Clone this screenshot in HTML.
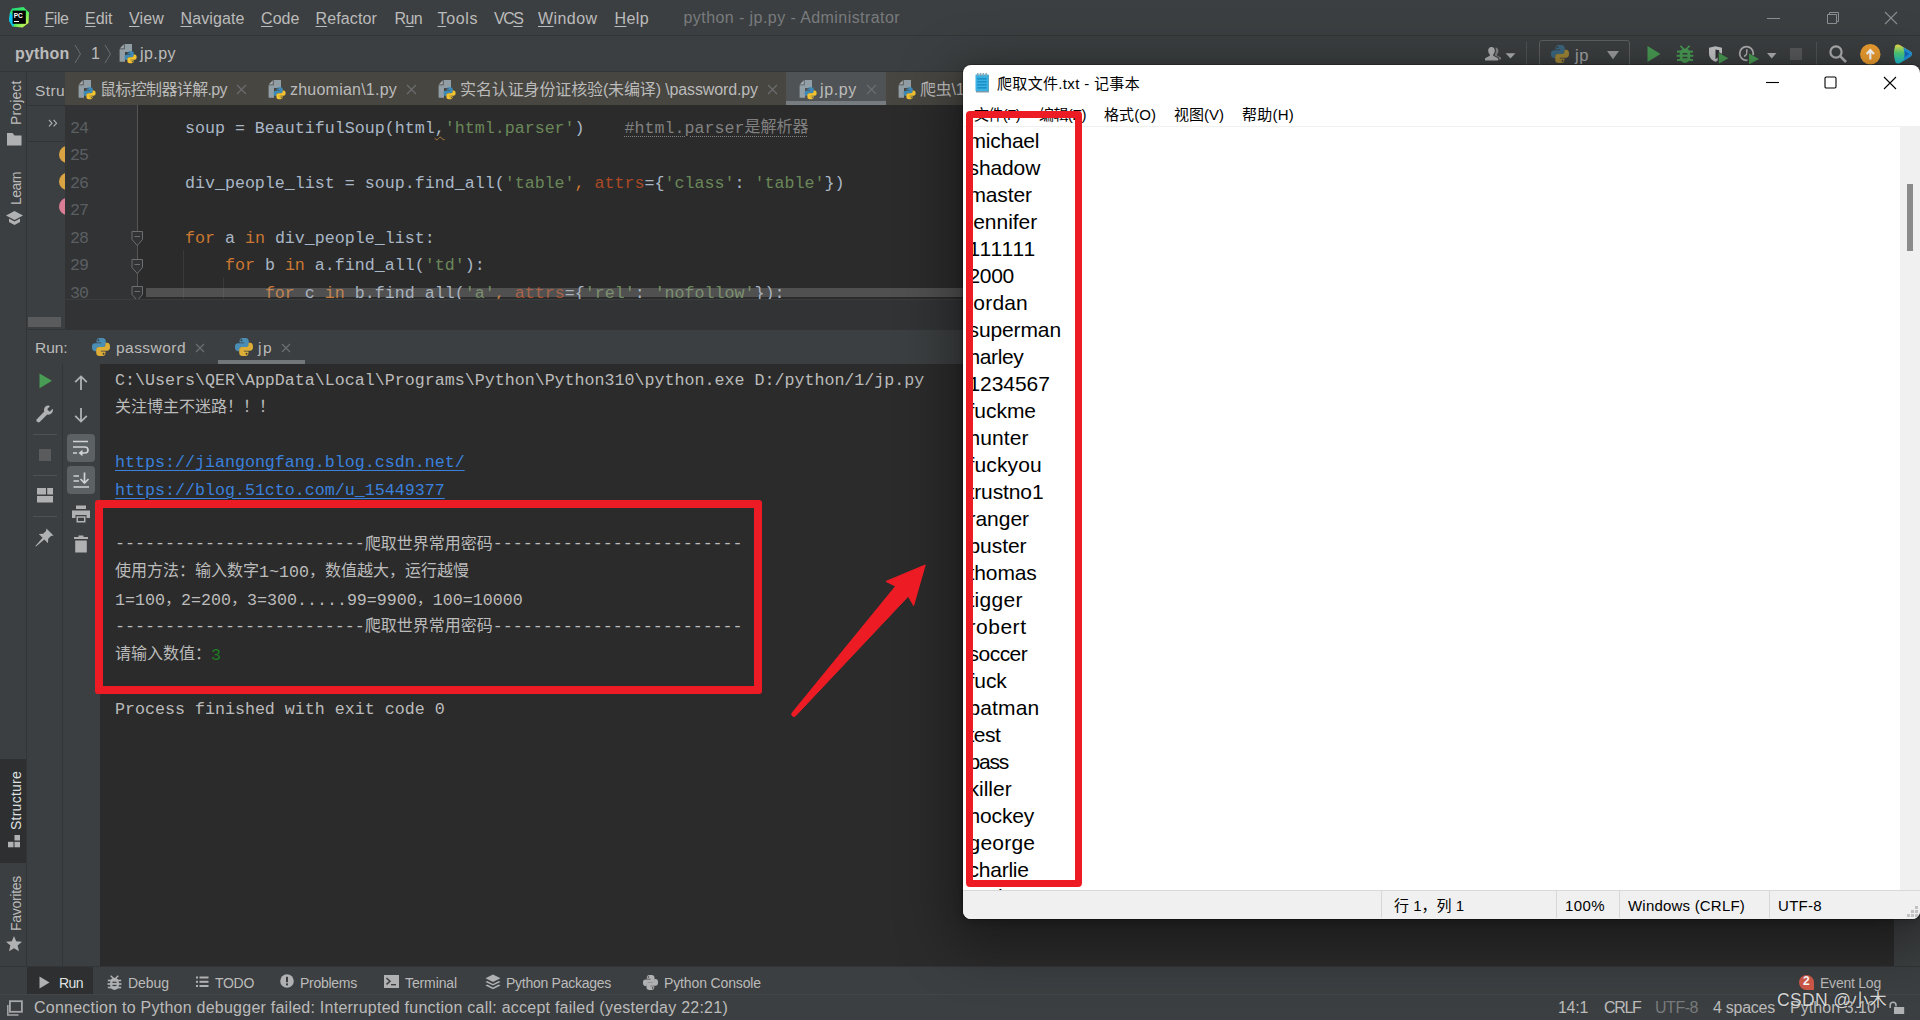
<!DOCTYPE html>
<html lang="zh"><head><meta charset="utf-8"><title>python - jp.py</title>
<style>
*{box-sizing:border-box;margin:0;padding:0}
html,body{width:1920px;height:1020px;overflow:hidden;background:#3c3f41}
body{position:relative;font-family:"Liberation Sans","Noto Sans CJK SC",sans-serif;color:#bbbbbb;font-size:16px}
.a{position:absolute}
.t{position:absolute;white-space:pre;display:block}
u{text-decoration:underline;text-underline-offset:2px;text-decoration-thickness:1px}
svg{position:absolute;overflow:visible}
.hl{position:absolute;height:1px;background:#323232}
.vl{position:absolute;width:1px;background:#323232}
.code{position:absolute;white-space:pre;font-family:"Liberation Mono","Noto Sans CJK SC",monospace;font-size:16.67px;line-height:27.5px;height:27.5px;color:#a9b7c6;letter-spacing:-0.004px}
.code .cj{font-size:16px;letter-spacing:0;position:relative;top:-1px}
.ds{position:relative;top:-1.5px}
.k{color:#cc7832}.s{color:#6a8759}.p{color:#aa4926}.c{color:#808080}
.con{color:#bbbbbb}
.lnk{color:#3a80dc;text-decoration:underline;text-underline-offset:3px;text-decoration-thickness:1px}
.ln{position:absolute;left:5px;width:20px;font-family:"Liberation Mono",monospace;font-size:16.67px;line-height:27.5px;color:#5c5f62;letter-spacing:-1px}
.np{position:absolute;left:969px;white-space:pre;font-family:"Liberation Sans","Noto Sans CJK SC",sans-serif;font-size:21px;letter-spacing:-0.3px;line-height:27px;height:27px;color:#000}

</style></head>
<body>
<div class="a" id="ide" style="left:0;top:0;width:1920px;height:1020px;background:#3c3f41">
<svg style="left:9px;top:7px" width="21" height="21" viewBox="0 0 21 21"><defs><linearGradient id="pcg" x1="0" y1="0" x2="1" y2="1"><stop offset="0" stop-color="#21d789"/><stop offset=".5" stop-color="#3bea62"/><stop offset="1" stop-color="#fcf84a"/></linearGradient></defs><path fill="url(#pcg)" d="M3 1.5L14.5 0L20 5.5L19.5 16L13.5 20.5L3.5 19.5L0 13.5L1 5.5Z"/><path fill="#07c3f2" d="M0 13.5L1 5.5L4 9L5 18.5L3.5 19.5Z"/><rect x="3.6" y="3.6" width="13.2" height="13.2" fill="#000"/><rect x="5" y="14" width="5" height="1" fill="#fff"/><text x="4.7" y="10.6" font-family="Liberation Sans,sans-serif" font-weight="bold" font-size="6.6" fill="#fff">PC</text></svg>
<span class="t" id="f0" style="left:44.5px;top:7.5px;font-size:16px;line-height:22px;color:#bbbbbb;letter-spacing:-0.449px;"><u>F</u>ile</span>
<span class="t" id="f1" style="left:85px;top:7.5px;font-size:16px;line-height:22px;color:#bbbbbb;letter-spacing:-0.020px;"><u>E</u>dit</span>
<span class="t" id="f2" style="left:129px;top:7.5px;font-size:16px;line-height:22px;color:#bbbbbb;letter-spacing:0.148px;"><u>V</u>iew</span>
<span class="t" id="f3" style="left:180.5px;top:7.5px;font-size:16px;line-height:22px;color:#bbbbbb;letter-spacing:0.105px;"><u>N</u>avigate</span>
<span class="t" id="f4" style="left:261px;top:7.5px;font-size:16px;line-height:22px;color:#bbbbbb;letter-spacing:0.059px;"><u>C</u>ode</span>
<span class="t" id="f5" style="left:315.5px;top:7.5px;font-size:16px;line-height:22px;color:#bbbbbb;letter-spacing:0.127px;"><u>R</u>efactor</span>
<span class="t" id="f6" style="left:394.5px;top:7.5px;font-size:16px;line-height:22px;color:#bbbbbb;letter-spacing:-0.625px;">R<u>u</u>n</span>
<span class="t" id="f7" style="left:437.5px;top:7.5px;font-size:16px;line-height:22px;color:#bbbbbb;letter-spacing:0.628px;"><u>T</u>ools</span>
<span class="t" id="f8" style="left:494px;top:7.5px;font-size:16px;line-height:22px;color:#bbbbbb;letter-spacing:-1.469px;">VC<u>S</u></span>
<span class="t" id="f9" style="left:538px;top:7.5px;font-size:16px;line-height:22px;color:#bbbbbb;letter-spacing:0.430px;"><u>W</u>indow</span>
<span class="t" id="f10" style="left:614.5px;top:7.5px;font-size:16px;line-height:22px;color:#bbbbbb;letter-spacing:0.395px;"><u>H</u>elp</span>
<span class="t" id="f11" style="left:683.5px;top:7.0px;font-size:16px;line-height:22px;color:#787b7d;letter-spacing:0.429px;">python - jp.py - Administrator</span>
<svg style="left:1767px;top:11px" width="14" height="14"><path d="M0 7.5H13" stroke="#8c8e90" stroke-width="1"/></svg>
<svg style="left:1826px;top:11px" width="14" height="14"><path d="M3.5 3.5V1.5H12.5V10.5H10.5M1.5 3.5H10.5V12.5H1.5Z" stroke="#8c8e90" stroke-width="1" fill="none"/></svg>
<svg style="left:1884px;top:11px" width="14" height="14"><path d="M1 1L13 13M13 1L1 13" stroke="#8c8e90" stroke-width="1.1" fill="none"/></svg>
<div class="a" style="left:0px;top:35px;width:1920px;height:1px;background:#323436;"></div>
<span class="t" id="f12" style="left:15px;top:42.5px;font-size:16px;line-height:22px;color:#bbbbbb;font-weight:bold;letter-spacing:0.195px;">python</span>
<svg style="left:74px;top:44px" width="8" height="20"><path d="M1 1L6.5 10L1 19" stroke="#6b6e70" stroke-width="1" fill="none"/></svg>
<span class="t" id="f13" style="left:91px;top:42.5px;font-size:16px;line-height:22px;color:#bbbbbb;">1</span>
<svg style="left:104px;top:44px" width="8" height="20"><path d="M1 1L6.5 10L1 19" stroke="#6b6e70" stroke-width="1" fill="none"/></svg>
<svg style="left:119px;top:44px" width="18" height="19" viewBox="0 0 18 19"><path fill="#9aa7b0" fill-opacity=".9" d="M5.6 0H13V8H6V17.8H0.6V5.2H5.6Z"/><path fill="#c5cdd3" fill-opacity=".75" d="M0.8 4.4L4.8 0.3V4.4Z"/><g transform="translate(5.6 7.2) scale(1)"><path fill="#3d8ab8" d="M5 0H7C8.4 0 9.2 .9 9.2 2.2V4.2C9.2 5.3 8.4 6 7.4 6H4.6C3.6 6 3 6.7 3 7.6V8.8H1.9C.7 8.8 0 7.8 0 6.4V5.6C0 4.3 .8 3.5 2 3.5H6.1V3H3V2.2C3 .9 3.7 0 5 0ZM4.3 .9A.65.65 0 1 0 4.3 2.2A.65.65 0 1 0 4.3 .9Z"/><path fill="#f2c230" transform="rotate(180 6 6)" d="M5 0H7C8.4 0 9.2 .9 9.2 2.2V4.2C9.2 5.3 8.4 6 7.4 6H4.6C3.6 6 3 6.7 3 7.6V8.8H1.9C.7 8.8 0 7.8 0 6.4V5.6C0 4.3 .8 3.5 2 3.5H6.1V3H3V2.2C3 .9 3.7 0 5 0ZM4.3 .9A.65.65 0 1 0 4.3 2.2A.65.65 0 1 0 4.3 .9Z"/></g></svg>
<span class="t" id="f14" style="left:140px;top:42.5px;font-size:16px;line-height:22px;color:#bbbbbb;letter-spacing:0.441px;">jp.py</span>
<svg style="left:1484px;top:45px" width="32" height="20" viewBox="0 0 32 20"><path fill="#afb1b3" d="M7.5 2C9.6 2 10.8 3.6 10.8 5.6C10.8 7.4 10 8.8 9.2 9.6V10.8L14.2 13.2V15.5H1V13.2L5.8 10.8V9.6C5 8.8 4.2 7.4 4.2 5.6C4.2 3.6 5.4 2 7.5 2Z"/><path fill="#afb1b3" fill-opacity=".6" d="M11.5 2.6C13.4 2.6 14.4 4 14.4 5.8C14.4 7.4 13.8 8.6 13 9.4V10.4L17 12.4V14.5H15V12.6L10.4 10.3C11.2 9.3 11.9 7.6 11.9 5.6C11.9 4.4 11.8 3.4 11.5 2.6Z"/><path fill="#afb1b3" d="M21.6 8.2H31.4L26.5 13.4Z"/></svg>
<div class="a" style="left:1526px;top:42px;width:1px;height:24px;background:#515456;"></div>
<div class="a" style="left:1539px;top:40px;width:91px;height:34px;border:1px solid #5e6062;border-radius:3px"></div>
<svg style="left:1551px;top:45px;opacity:0.55" width="18" height="18" viewBox="0 0 12 12"><path fill="#3d8ab8" d="M5 0H7C8.4 0 9.2 .9 9.2 2.2V4.2C9.2 5.3 8.4 6 7.4 6H4.6C3.6 6 3 6.7 3 7.6V8.8H1.9C.7 8.8 0 7.8 0 6.4V5.6C0 4.3 .8 3.5 2 3.5H6.1V3H3V2.2C3 .9 3.7 0 5 0ZM4.3 .9A.65.65 0 1 0 4.3 2.2A.65.65 0 1 0 4.3 .9Z"/><path fill="#f2c230" transform="rotate(180 6 6)" d="M5 0H7C8.4 0 9.2 .9 9.2 2.2V4.2C9.2 5.3 8.4 6 7.4 6H4.6C3.6 6 3 6.7 3 7.6V8.8H1.9C.7 8.8 0 7.8 0 6.4V5.6C0 4.3 .8 3.5 2 3.5H6.1V3H3V2.2C3 .9 3.7 0 5 0ZM4.3 .9A.65.65 0 1 0 4.3 2.2A.65.65 0 1 0 4.3 .9Z"/></svg>
<span class="t" id="f15" style="left:1575px;top:43.5px;font-size:16.5px;line-height:23px;color:#a4a6a8;letter-spacing:0.578px;">jp</span>
<svg style="left:1606.5px;top:51px" width="12" height="9"><path fill="#9a9c9e" d="M0 0H12L6 8.2Z"/></svg>
<svg style="left:1647px;top:46px" width="14" height="16"><path fill="#499c54" d="M0.5 0L13.5 8L0.5 16Z"/></svg>
<svg style="left:1676px;top:45.3px" width="18" height="18" viewBox="0 0 18 18"><g fill="#499c54"><path d="M3.8 8.4C3.8 5.4 6 3.4 9 3.4S14.2 5.4 14.2 8.4V12.6C14.2 15.8 11.8 17.9 9 17.9S3.8 15.8 3.8 12.6Z"/><path d="M5 0.2L8.2 3.4L7 4.6L3.8 1.4ZM13 0.2L9.8 3.4L11 4.6L14.2 1.4Z"/><rect x="1" y="5.6" width="16" height="2"/><rect x="0.6" y="9.8" width="16.8" height="2"/><rect x="1" y="14" width="16" height="2"/></g><rect x="6.6" y="8" width="4.8" height="1.5" fill="#3c3f41"/><rect x="6.6" y="11.8" width="4.8" height="1.5" fill="#3c3f41"/></svg>
<svg style="left:1708px;top:46px" width="22" height="20" viewBox="0 0 22 20"><path fill="#c3c5c7" d="M1 1.8L7.5 0.3L14 1.8V7.6C14 11.6 11 14.6 7.5 15.8C4 14.6 1 11.6 1 7.6Z"/><path fill="#2f3234" d="M7.5 3.4L11.2 4.2V8.4C11.2 10.4 9.6 12 7.5 13Z"/><path fill="#3c3f41" d="M9.6 5.4L22 12.2L9.6 19.4Z"/><path fill="#499c54" d="M10.8 7L20.3 12.3L10.8 17.7Z"/></svg>
<svg style="left:1738px;top:45px" width="24" height="20" viewBox="0 0 24 20"><circle cx="8.5" cy="8.5" r="6.8" fill="none" stroke="#afb1b3" stroke-width="1.8"/><path d="M8.8 4.2V9L6.2 11.6" stroke="#afb1b3" stroke-width="1.5" fill="none"/><path fill="#3c3f41" d="M9.5 7L22 14L9.5 21Z"/><path fill="#499c54" d="M11 8.5L21 14L11 19.5Z"/></svg>
<svg style="left:1766.5px;top:53px" width="10" height="6"><path fill="#afb1b3" d="M0 0H9.5L4.75 5.5Z"/></svg>
<div class="a" style="left:1790px;top:48px;width:12px;height:12px;background:#57595b;"></div>
<div class="a" style="left:1816px;top:42px;width:1px;height:24px;background:#515456;"></div>
<svg style="left:1828px;top:44px" width="20" height="20" viewBox="0 0 20 20"><circle cx="8" cy="8" r="5.6" fill="none" stroke="#afb1b3" stroke-width="2.2"/><path d="M12.2 12.2L18 18" stroke="#afb1b3" stroke-width="2.6"/></svg>
<svg style="left:1860px;top:44px" width="21" height="21" viewBox="0 0 21 21"><circle cx="10.3" cy="10.3" r="10.2" fill="#f0a030"/><path d="M10.3 15.5V6.8M6.6 10L10.3 6.2L14 10" stroke="#fff" stroke-width="2.2" fill="none"/></svg>
<svg style="left:1893px;top:44px" width="20" height="20" viewBox="0 0 20 20"><defs><linearGradient id="cwg" x1="0" y1="0" x2="0" y2="1"><stop offset="0" stop-color="#f3e04a"/><stop offset=".45" stop-color="#4fd07a"/><stop offset="1" stop-color="#19b8d8"/></linearGradient></defs><path fill="url(#cwg)" d="M2.2 1.6C3.6 0.2 5.6 0.2 7.2 1.2L17.6 7.6C19.4 8.8 19.4 11.2 17.6 12.4L7.2 18.9C5.6 19.9 3.6 19.6 2.4 18.2C0.6 13 0.4 7 2.2 1.6Z"/><path fill="#1e8fe0" d="M10.2 3.2L17.6 7.6C19.4 8.8 19.4 11.2 17.6 12.4L10.4 16.9C12 12.5 12 7.5 10.2 3.2Z"/><path fill="#1565b8" d="M11.4 6.8L16 10L11.4 13.2C11.9 11.2 11.9 8.8 11.4 6.8Z"/></svg>
<div class="a" style="left:0px;top:71px;width:1920px;height:1px;background:#323436;"></div>
<div class="a" style="left:0px;top:72px;width:27px;height:894px;background:#3c3f41;"></div>
<div class="a" style="left:26px;top:72px;width:1px;height:894px;background:#323436;"></div>
<div class="a" style="left:0px;top:759px;width:26px;height:104px;background:#2d2f30;"></div>
<span class="t" id="f16" style="left:5.5px;top:125px;height:20px;line-height:20px;font-size:14px;color:#bbbbbb;transform-origin:0 0;transform:rotate(-90deg);letter-spacing:0.132px;">Project</span>
<span class="t" id="f17" style="left:5.5px;top:205px;height:20px;line-height:20px;font-size:14px;color:#bbbbbb;transform-origin:0 0;transform:rotate(-90deg);letter-spacing:-0.562px;">Learn</span>
<span class="t" id="f18" style="left:5.5px;top:830px;height:20px;line-height:20px;font-size:14px;color:#dfe1e2;transform-origin:0 0;transform:rotate(-90deg);letter-spacing:0.243px;">Structure</span>
<span class="t" id="f19" style="left:5.5px;top:931px;height:20px;line-height:20px;font-size:14px;color:#bbbbbb;transform-origin:0 0;transform:rotate(-90deg);letter-spacing:-0.286px;">Favorites</span>
<svg style="left:7px;top:133px" width="15" height="13"><path fill="#afb1b3" d="M0 0H5.5L7.5 2.5H14.5V12.5H0Z"/></svg>
<svg style="left:6px;top:211px" width="17" height="15" viewBox="0 0 17 15"><path fill="#afb1b3" d="M8.5 0L17 4.5L8.5 9L0 4.5Z"/><path fill="#afb1b3" d="M3 7.6L8.5 10.5L14 7.6V11L8.5 14L3 11Z"/></svg>
<svg style="left:8px;top:835px" width="13" height="13"><g fill="#afb1b3"><rect x="6.5" y="0" width="5.5" height="5.5"/><rect x="0" y="6.8" width="5.5" height="5.5"/><rect x="6.5" y="6.8" width="5.5" height="5.5"/></g></svg>
<svg style="left:6px;top:936px" width="16" height="16" viewBox="0 0 16 16"><path fill="#afb1b3" d="M8 0L10.2 5.3L16 5.8L11.6 9.6L13 15.2L8 12.2L3 15.2L4.4 9.6L0 5.8L5.8 5.3Z"/></svg>
<div class="a" style="left:27px;top:72px;width:38px;height:258px;background:#3c3f41;"></div>
<span class="t" id="f20" style="left:35px;top:79.7px;font-size:15.5px;line-height:22px;color:#bbbbbb;letter-spacing:0.391px;">Stru</span>
<div class="a" style="left:27px;top:105px;width:38px;height:1px;background:#323436;"></div>
<div class="a" style="left:27px;top:141px;width:38px;height:1px;background:#323436;"></div>
<svg style="left:48px;top:118.5px" width="10" height="9"><path d="M1 1L4 4.2L1 7.4M5.6 1L8.6 4.2L5.6 7.4" stroke="#afb1b3" stroke-width="1.1" fill="none"/></svg>
<div class="a" style="left:28px;top:317px;width:33px;height:10px;background:#595b5d;"></div>
<div class="a" style="left:65px;top:72px;width:1855px;height:33px;background:#474641;"></div>
<div class="a" style="left:786px;top:72px;width:100px;height:33px;background:#4f5355;"></div>
<div class="a" style="left:786px;top:101px;width:100px;height:4px;background:#777c80;"></div>
<svg style="left:78px;top:80px" width="18" height="19" viewBox="0 0 18 19"><path fill="#9aa7b0" fill-opacity=".9" d="M5.6 0H13V8H6V17.8H0.6V5.2H5.6Z"/><path fill="#c5cdd3" fill-opacity=".75" d="M0.8 4.4L4.8 0.3V4.4Z"/><g transform="translate(5.6 7.2) scale(1)"><path fill="#3d8ab8" d="M5 0H7C8.4 0 9.2 .9 9.2 2.2V4.2C9.2 5.3 8.4 6 7.4 6H4.6C3.6 6 3 6.7 3 7.6V8.8H1.9C.7 8.8 0 7.8 0 6.4V5.6C0 4.3 .8 3.5 2 3.5H6.1V3H3V2.2C3 .9 3.7 0 5 0ZM4.3 .9A.65.65 0 1 0 4.3 2.2A.65.65 0 1 0 4.3 .9Z"/><path fill="#f2c230" transform="rotate(180 6 6)" d="M5 0H7C8.4 0 9.2 .9 9.2 2.2V4.2C9.2 5.3 8.4 6 7.4 6H4.6C3.6 6 3 6.7 3 7.6V8.8H1.9C.7 8.8 0 7.8 0 6.4V5.6C0 4.3 .8 3.5 2 3.5H6.1V3H3V2.2C3 .9 3.7 0 5 0ZM4.3 .9A.65.65 0 1 0 4.3 2.2A.65.65 0 1 0 4.3 .9Z"/></g></svg>
<span class="t" id="f21" style="left:100px;top:78.7px;font-size:16px;line-height:22px;color:#bbbbbb;letter-spacing:-0.636px;">鼠标控制器详解.py</span>
<svg style="left:236.5px;top:84.5px" width="9.0" height="9.0" viewBox="0 0 9.0 9.0"><path d="M0 0L9.0 9.0M9.0 0L0 9.0" stroke="#6c6e6f" stroke-width="1.1" fill="none"/></svg>
<svg style="left:268px;top:80px" width="18" height="19" viewBox="0 0 18 19"><path fill="#9aa7b0" fill-opacity=".9" d="M5.6 0H13V8H6V17.8H0.6V5.2H5.6Z"/><path fill="#c5cdd3" fill-opacity=".75" d="M0.8 4.4L4.8 0.3V4.4Z"/><g transform="translate(5.6 7.2) scale(1)"><path fill="#3d8ab8" d="M5 0H7C8.4 0 9.2 .9 9.2 2.2V4.2C9.2 5.3 8.4 6 7.4 6H4.6C3.6 6 3 6.7 3 7.6V8.8H1.9C.7 8.8 0 7.8 0 6.4V5.6C0 4.3 .8 3.5 2 3.5H6.1V3H3V2.2C3 .9 3.7 0 5 0ZM4.3 .9A.65.65 0 1 0 4.3 2.2A.65.65 0 1 0 4.3 .9Z"/><path fill="#f2c230" transform="rotate(180 6 6)" d="M5 0H7C8.4 0 9.2 .9 9.2 2.2V4.2C9.2 5.3 8.4 6 7.4 6H4.6C3.6 6 3 6.7 3 7.6V8.8H1.9C.7 8.8 0 7.8 0 6.4V5.6C0 4.3 .8 3.5 2 3.5H6.1V3H3V2.2C3 .9 3.7 0 5 0ZM4.3 .9A.65.65 0 1 0 4.3 2.2A.65.65 0 1 0 4.3 .9Z"/></g></svg>
<span class="t" id="f22" style="left:290px;top:78.7px;font-size:16px;line-height:22px;color:#bbbbbb;letter-spacing:0.226px;">zhuomian\1.py</span>
<svg style="left:406.5px;top:84.5px" width="9.0" height="9.0" viewBox="0 0 9.0 9.0"><path d="M0 0L9.0 9.0M9.0 0L0 9.0" stroke="#6c6e6f" stroke-width="1.1" fill="none"/></svg>
<svg style="left:438px;top:80px" width="18" height="19" viewBox="0 0 18 19"><path fill="#9aa7b0" fill-opacity=".9" d="M5.6 0H13V8H6V17.8H0.6V5.2H5.6Z"/><path fill="#c5cdd3" fill-opacity=".75" d="M0.8 4.4L4.8 0.3V4.4Z"/><g transform="translate(5.6 7.2) scale(1)"><path fill="#3d8ab8" d="M5 0H7C8.4 0 9.2 .9 9.2 2.2V4.2C9.2 5.3 8.4 6 7.4 6H4.6C3.6 6 3 6.7 3 7.6V8.8H1.9C.7 8.8 0 7.8 0 6.4V5.6C0 4.3 .8 3.5 2 3.5H6.1V3H3V2.2C3 .9 3.7 0 5 0ZM4.3 .9A.65.65 0 1 0 4.3 2.2A.65.65 0 1 0 4.3 .9Z"/><path fill="#f2c230" transform="rotate(180 6 6)" d="M5 0H7C8.4 0 9.2 .9 9.2 2.2V4.2C9.2 5.3 8.4 6 7.4 6H4.6C3.6 6 3 6.7 3 7.6V8.8H1.9C.7 8.8 0 7.8 0 6.4V5.6C0 4.3 .8 3.5 2 3.5H6.1V3H3V2.2C3 .9 3.7 0 5 0ZM4.3 .9A.65.65 0 1 0 4.3 2.2A.65.65 0 1 0 4.3 .9Z"/></g></svg>
<span class="t" id="f23" style="left:460px;top:78.7px;font-size:16px;line-height:22px;color:#bbbbbb;letter-spacing:-0.125px;">实名认证身份证核验(未编译) \password.py</span>
<svg style="left:767.5px;top:84.5px" width="9.0" height="9.0" viewBox="0 0 9.0 9.0"><path d="M0 0L9.0 9.0M9.0 0L0 9.0" stroke="#6c6e6f" stroke-width="1.1" fill="none"/></svg>
<svg style="left:799px;top:80px" width="18" height="19" viewBox="0 0 18 19"><path fill="#9aa7b0" fill-opacity=".9" d="M5.6 0H13V8H6V17.8H0.6V5.2H5.6Z"/><path fill="#c5cdd3" fill-opacity=".75" d="M0.8 4.4L4.8 0.3V4.4Z"/><g transform="translate(5.6 7.2) scale(1)"><path fill="#3d8ab8" d="M5 0H7C8.4 0 9.2 .9 9.2 2.2V4.2C9.2 5.3 8.4 6 7.4 6H4.6C3.6 6 3 6.7 3 7.6V8.8H1.9C.7 8.8 0 7.8 0 6.4V5.6C0 4.3 .8 3.5 2 3.5H6.1V3H3V2.2C3 .9 3.7 0 5 0ZM4.3 .9A.65.65 0 1 0 4.3 2.2A.65.65 0 1 0 4.3 .9Z"/><path fill="#f2c230" transform="rotate(180 6 6)" d="M5 0H7C8.4 0 9.2 .9 9.2 2.2V4.2C9.2 5.3 8.4 6 7.4 6H4.6C3.6 6 3 6.7 3 7.6V8.8H1.9C.7 8.8 0 7.8 0 6.4V5.6C0 4.3 .8 3.5 2 3.5H6.1V3H3V2.2C3 .9 3.7 0 5 0ZM4.3 .9A.65.65 0 1 0 4.3 2.2A.65.65 0 1 0 4.3 .9Z"/></g></svg>
<span class="t" id="f24" style="left:820px;top:78.7px;font-size:16px;line-height:22px;color:#bbbbbb;letter-spacing:0.641px;">jp.py</span>
<svg style="left:866.5px;top:84.5px" width="9.0" height="9.0" viewBox="0 0 9.0 9.0"><path d="M0 0L9.0 9.0M9.0 0L0 9.0" stroke="#6c6e6f" stroke-width="1.1" fill="none"/></svg>
<svg style="left:898px;top:80px" width="18" height="19" viewBox="0 0 18 19"><path fill="#9aa7b0" fill-opacity=".9" d="M5.6 0H13V8H6V17.8H0.6V5.2H5.6Z"/><path fill="#c5cdd3" fill-opacity=".75" d="M0.8 4.4L4.8 0.3V4.4Z"/><g transform="translate(5.6 7.2) scale(1)"><path fill="#3d8ab8" d="M5 0H7C8.4 0 9.2 .9 9.2 2.2V4.2C9.2 5.3 8.4 6 7.4 6H4.6C3.6 6 3 6.7 3 7.6V8.8H1.9C.7 8.8 0 7.8 0 6.4V5.6C0 4.3 .8 3.5 2 3.5H6.1V3H3V2.2C3 .9 3.7 0 5 0ZM4.3 .9A.65.65 0 1 0 4.3 2.2A.65.65 0 1 0 4.3 .9Z"/><path fill="#f2c230" transform="rotate(180 6 6)" d="M5 0H7C8.4 0 9.2 .9 9.2 2.2V4.2C9.2 5.3 8.4 6 7.4 6H4.6C3.6 6 3 6.7 3 7.6V8.8H1.9C.7 8.8 0 7.8 0 6.4V5.6C0 4.3 .8 3.5 2 3.5H6.1V3H3V2.2C3 .9 3.7 0 5 0ZM4.3 .9A.65.65 0 1 0 4.3 2.2A.65.65 0 1 0 4.3 .9Z"/></g></svg>
<span class="t" id="f25" style="left:920px;top:78.7px;font-size:16px;line-height:22px;color:#bbbbbb;letter-spacing:-0.243px;">爬虫\1.py</span>
<svg style="left:994.5px;top:84.5px" width="9.0" height="9.0" viewBox="0 0 9.0 9.0"><path d="M0 0L9.0 9.0M9.0 0L0 9.0" stroke="#6c6e6f" stroke-width="1.1" fill="none"/></svg>
<div class="a" style="left:65px;top:105px;width:1855px;height:195px;background:#2b2b2b;"></div>
<div class="a" style="left:65px;top:105px;width:73px;height:195px;background:#313335;"></div>
<div class="a" style="left:137px;top:105px;width:1px;height:195px;background:#555555;"></div>
<div class="a" style="left:183px;top:250px;width:1px;height:50px;background:#393939;"></div>
<div class="a" style="left:223px;top:278px;width:1px;height:22px;background:#393939;"></div>
<div class="a" style="left:58px;top:105px;width:7px;height:195px;overflow:hidden"><div class="a" style="left:1px;top:41px;width:17px;height:17px;border-radius:50%;background:#d9a343"></div><div class="a" style="left:1px;top:68px;width:17px;height:17px;border-radius:50%;background:#d9a343"></div><div class="a" style="left:1px;top:93px;width:17px;height:17px;border-radius:50%;background:#db7e95"></div></div>
<div class="a" style="left:65px;top:105px;width:1855px;height:195px;overflow:hidden">
<div class="ln" style="top:9.85px">24</div>
<div class="code" style="left:40px;top:9.85px">        soup = BeautifulSoup(html<span style="text-decoration:underline wavy #b07a36 1px;text-underline-offset:3px">,</span><span class="s">'html.parser'</span>)    <span class="c" style="text-decoration:underline dotted #808080 1px;text-underline-offset:3px">#html.parser<span class="cj">是解析器</span></span></div>
<div class="ln" style="top:37.35px">25</div>
<div class="code" style="left:40px;top:37.35px"></div>
<div class="ln" style="top:64.85px">26</div>
<div class="code" style="left:40px;top:64.85px">        div_people_list = soup.find_all(<span class="s">'table'</span><span class="k">,</span> <span class="p">attrs</span>={<span class="s">'class'</span>: <span class="s">'table'</span>})</div>
<div class="ln" style="top:92.35px">27</div>
<div class="code" style="left:40px;top:92.35px"></div>
<div class="ln" style="top:119.85px">28</div>
<div class="code" style="left:40px;top:119.85px">        <span class="k">for</span> a <span class="k">in</span> div_people_list:</div>
<div class="ln" style="top:147.35px">29</div>
<div class="code" style="left:40px;top:147.35px">            <span class="k">for</span> b <span class="k">in</span> a.find_all(<span class="s">'td'</span>):</div>
<div class="ln" style="top:174.85px">30</div>
<div class="code" style="left:40px;top:174.85px">                <span class="k">for</span> c <span class="k">in</span> b.find_all(<span class="s">'a'</span><span class="k">,</span> <span class="p">attrs</span>={<span class="s">'rel'</span>: <span class="s">'nofollow'</span>}):</div>
<svg style="left:66px;top:126.0px" width="13" height="16"><path d="M1 0.5H11.5V8.5L6.25 14.5L1 8.5Z" fill="#313335" stroke="#6c6e70" stroke-width="1"/><path d="M3.5 5.5H9" stroke="#6c6e70" stroke-width="1"/></svg>
<svg style="left:66px;top:153.5px" width="13" height="16"><path d="M1 0.5H11.5V8.5L6.25 14.5L1 8.5Z" fill="#313335" stroke="#6c6e70" stroke-width="1"/><path d="M3.5 5.5H9" stroke="#6c6e70" stroke-width="1"/></svg>
<svg style="left:66px;top:181.0px" width="13" height="16"><path d="M1 0.5H11.5V8.5L6.25 14.5L1 8.5Z" fill="#313335" stroke="#6c6e70" stroke-width="1"/><path d="M3.5 5.5H9" stroke="#6c6e70" stroke-width="1"/></svg>
</div>
<div class="a" style="left:146px;top:287.5px;width:1774px;height:9.5px;background:rgba(166,166,166,.30);"></div>
<div class="a" style="left:27px;top:299px;width:38px;height:31px;background:#3c3f41;"></div>
<div class="a" style="left:65px;top:299px;width:1855px;height:30px;background:#313335;"></div>
<div class="a" style="left:65px;top:299px;width:1855px;height:1px;background:#3a3d3f;"></div>
<div class="a" style="left:28px;top:317px;width:33px;height:10px;background:#595b5d;"></div>
<div class="a" style="left:27px;top:329px;width:1893px;height:1px;background:#323436;"></div>
<div class="a" style="left:27px;top:330px;width:1893px;height:34px;background:#3c3f41;"></div>
<span class="t" id="f26" style="left:35px;top:336.5px;font-size:15.5px;line-height:22px;color:#bbbbbb;letter-spacing:-0.062px;">Run:</span>
<svg style="left:92px;top:338px;opacity:1" width="18" height="18" viewBox="0 0 12 12"><path fill="#4a8db5" d="M5 0H7C8.4 0 9.2 .9 9.2 2.2V4.2C9.2 5.3 8.4 6 7.4 6H4.6C3.6 6 3 6.7 3 7.6V8.8H1.9C.7 8.8 0 7.8 0 6.4V5.6C0 4.3 .8 3.5 2 3.5H6.1V3H3V2.2C3 .9 3.7 0 5 0ZM4.3 .9A.65.65 0 1 0 4.3 2.2A.65.65 0 1 0 4.3 .9Z"/><path fill="#dcae38" transform="rotate(180 6 6)" d="M5 0H7C8.4 0 9.2 .9 9.2 2.2V4.2C9.2 5.3 8.4 6 7.4 6H4.6C3.6 6 3 6.7 3 7.6V8.8H1.9C.7 8.8 0 7.8 0 6.4V5.6C0 4.3 .8 3.5 2 3.5H6.1V3H3V2.2C3 .9 3.7 0 5 0ZM4.3 .9A.65.65 0 1 0 4.3 2.2A.65.65 0 1 0 4.3 .9Z"/></svg>
<span class="t" id="f27" style="left:116px;top:336.5px;font-size:15.5px;line-height:22px;color:#bbbbbb;letter-spacing:0.457px;">password</span>
<svg style="left:196px;top:343.5px" width="8" height="8" viewBox="0 0 8 8"><path d="M0 0L8 8M8 0L0 8" stroke="#6c6e6f" stroke-width="1.2" fill="none"/></svg>
<svg style="left:235px;top:338px;opacity:1" width="18" height="18" viewBox="0 0 12 12"><path fill="#4a8db5" d="M5 0H7C8.4 0 9.2 .9 9.2 2.2V4.2C9.2 5.3 8.4 6 7.4 6H4.6C3.6 6 3 6.7 3 7.6V8.8H1.9C.7 8.8 0 7.8 0 6.4V5.6C0 4.3 .8 3.5 2 3.5H6.1V3H3V2.2C3 .9 3.7 0 5 0ZM4.3 .9A.65.65 0 1 0 4.3 2.2A.65.65 0 1 0 4.3 .9Z"/><path fill="#dcae38" transform="rotate(180 6 6)" d="M5 0H7C8.4 0 9.2 .9 9.2 2.2V4.2C9.2 5.3 8.4 6 7.4 6H4.6C3.6 6 3 6.7 3 7.6V8.8H1.9C.7 8.8 0 7.8 0 6.4V5.6C0 4.3 .8 3.5 2 3.5H6.1V3H3V2.2C3 .9 3.7 0 5 0ZM4.3 .9A.65.65 0 1 0 4.3 2.2A.65.65 0 1 0 4.3 .9Z"/></svg>
<span class="t" id="f28" style="left:258px;top:336.5px;font-size:15.5px;line-height:22px;color:#bbbbbb;letter-spacing:1.461px;">jp</span>
<svg style="left:282px;top:343.5px" width="8" height="8" viewBox="0 0 8 8"><path d="M0 0L8 8M8 0L0 8" stroke="#6c6e6f" stroke-width="1.2" fill="none"/></svg>
<div class="a" style="left:218px;top:360px;width:87px;height:4px;background:#72777a;"></div>
<div class="a" style="left:27px;top:364px;width:1893px;height:602px;background:#3c3f41;"></div>
<div class="a" style="left:62px;top:364px;width:1px;height:602px;background:#323436;"></div>
<div class="a" style="left:100px;top:364px;width:1794px;height:602px;background:#2b2b2b;"></div>
<div class="a" style="left:1894px;top:364px;width:26px;height:602px;background:#3c3f41;"></div>
<svg style="left:39px;top:373px" width="14" height="16"><path fill="#499c54" d="M0.5 0.5L13 7.8L0.5 15.2Z"/></svg>
<svg style="left:36px;top:405px" width="18" height="18" viewBox="0 0 18 18"><path fill="#afb1b3" d="M12.2 0.6C10 0.6 8 2.5 8 4.9C8 5.5 8.1 6 8.3 6.5L0.8 14.2C0.2 14.8 0.2 15.8 0.8 16.4L1.5 17.1C2.1 17.7 3.1 17.7 3.7 17.1L11.2 9.5C11.6 9.6 12 9.7 12.5 9.7C15 9.7 16.9 7.7 16.9 5.3C16.9 4.7 16.8 4.2 16.6 3.7L13.6 6.7L11.2 4.3L14.1 1.1C13.5 0.8 12.9 0.6 12.2 0.6Z"/></svg>
<div class="a" style="left:33px;top:434px;width:24px;height:1px;background:#4f5254;"></div>
<div class="a" style="left:39px;top:449px;width:12px;height:12px;background:#595b5d;"></div>
<div class="a" style="left:33px;top:475px;width:24px;height:1px;background:#4f5254;"></div>
<svg style="left:37px;top:488px" width="16" height="15"><g fill="#afb1b3"><rect x="0" y="0" width="9" height="6.5"/><rect x="10.2" y="0" width="5.8" height="6.5"/><rect x="0" y="8" width="16" height="6.5"/></g></svg>
<div class="a" style="left:33px;top:516px;width:24px;height:1px;background:#4f5254;"></div>
<svg style="left:35px;top:528px" width="19" height="19" viewBox="0 0 19 19"><path fill="#afb1b3" d="M11.5 0.5L18.5 7.5L16 8L13.2 10.8L13 15.2L9.3 11.4L1 18.6L0.4 18L7.6 9.7L3.8 6L8.2 5.8L11 3Z"/></svg>
<svg style="left:74px;top:375px" width="14" height="16"><path d="M7 15V1.5M1.2 7.2L7 1.4L12.8 7.2" stroke="#afb1b3" stroke-width="1.8" fill="none"/></svg>
<svg style="left:74px;top:407px" width="14" height="16"><path d="M7 1V14.5M1.2 8.8L7 14.6L12.8 8.8" stroke="#afb1b3" stroke-width="1.8" fill="none"/></svg>
<div class="a" style="left:67px;top:433.5px;width:28px;height:28px;border-radius:4px;background:#5c6164"></div>
<svg style="left:72px;top:440px" width="18" height="16" viewBox="0 0 18 16"><path d="M1 1.5H16M1 7H13A3 3 0 0 1 13 13H8.5M1 13H5" stroke="#d0d2d3" stroke-width="1.6" fill="none"/><path fill="#d0d2d3" d="M10.5 9.8V16.2L6.5 13Z"/></svg>
<div class="a" style="left:67px;top:466px;width:28px;height:28px;border-radius:4px;background:#5c6164"></div>
<svg style="left:73px;top:472px" width="17" height="17" viewBox="0 0 17 17"><path d="M0.5 4H6M0.5 9H6M0.5 15H16" stroke="#d0d2d3" stroke-width="1.7" fill="none"/><path d="M11.5 0.5V10.5M7.5 7L11.5 11L15.5 7" stroke="#d0d2d3" stroke-width="1.7" fill="none"/></svg>
<svg style="left:72px;top:505px" width="18" height="18" viewBox="0 0 18 18"><g fill="#afb1b3"><rect x="4" y="0.5" width="10" height="3.5"/><path d="M0 5.5H18V13H14.5V10H3.5V13H0Z"/><path d="M4.5 11.2H13.5V17.5H4.5ZM6 12.7V16H12V12.7Z"/></g></svg>
<svg style="left:74px;top:535px" width="14" height="18" viewBox="0 0 14 18"><g fill="#afb1b3"><path d="M4.5 0.5H9.5V2H14V4H0V2H4.5Z"/><path d="M1.2 5.5H12.8V17.5H1.2Z"/></g></svg>
<div class="code con" style="left:115px;top:367.05px">C:\Users\QER\AppData\Local\Programs\Python\Python310\python.exe D:/python/1/jp.py</div>
<div class="code con" style="left:115px;top:394.50px"><span class="cj">关注博主不迷路！！！</span></div>
<div class="code con" style="left:115px;top:421.95px"></div>
<div class="code con" style="left:115px;top:449.40px"><span class="lnk">https://jiangongfang.blog.csdn.net/</span></div>
<div class="code con" style="left:115px;top:476.85px"><span class="lnk">https://blog.51cto.com/u_15449377</span></div>
<div class="code con" style="left:115px;top:504.30px"></div>
<div class="code con" style="left:115px;top:531.75px"><span class="ds">-------------------------</span><span class="cj">爬取世界常用密码</span><span class="ds">-------------------------</span></div>
<div class="code con" style="left:115px;top:559.20px"><span class="cj">使用方法：输入数字</span>1~100<span class="cj">，数值越大，运行越慢</span></div>
<div class="code con" style="left:115px;top:586.65px">1=100<span class="cj">，</span>2=200<span class="cj">，</span>3=300.....99=9900<span class="cj">，</span>100=10000</div>
<div class="code con" style="left:115px;top:614.10px"><span class="ds">-------------------------</span><span class="cj">爬取世界常用密码</span><span class="ds">-------------------------</span></div>
<div class="code con" style="left:115px;top:641.55px"><span class="cj">请输入数值：</span><span style="color:#1e7d22">3</span></div>
<div class="code con" style="left:115px;top:669.00px"></div>
<div class="code con" style="left:115px;top:696.45px">Process finished with exit code 0</div>
<div class="a" style="left:0px;top:966px;width:1920px;height:1px;background:#323436;"></div>
<div class="a" style="left:0px;top:967px;width:1920px;height:28px;background:#3c3f41;"></div>
<div class="a" style="left:27px;top:967px;width:66px;height:27px;background:#2d2f30;"></div>
<div class="a" style="left:0px;top:994px;width:1920px;height:1px;background:#434648;"></div>
<svg style="left:39px;top:976px" width="11" height="13"><path fill="#afb1b3" d="M0.5 0.5L10.5 6.5L0.5 12.5Z"/></svg>
<span class="t" id="f29" style="left:59px;top:972.5px;font-size:14px;line-height:20px;color:#dfe1e2;letter-spacing:-0.562px;">Run</span>
<svg style="left:107px;top:974.5px" width="15" height="15" viewBox="0 0 18 18"><g fill="#afb1b3"><path d="M3.8 8.4C3.8 5.4 6 3.4 9 3.4S14.2 5.4 14.2 8.4V12.6C14.2 15.8 11.8 17.9 9 17.9S3.8 15.8 3.8 12.6Z"/><path d="M5 0.2L8.2 3.4L7 4.6L3.8 1.4ZM13 0.2L9.8 3.4L11 4.6L14.2 1.4Z"/><rect x="1" y="5.6" width="16" height="2"/><rect x="0.6" y="9.8" width="16.8" height="2"/><rect x="1" y="14" width="16" height="2"/></g><rect x="6.6" y="8" width="4.8" height="1.5" fill="#3c3f41"/><rect x="6.6" y="11.8" width="4.8" height="1.5" fill="#3c3f41"/></svg>
<span class="t" id="f30" style="left:128px;top:972.5px;font-size:14px;line-height:20px;color:#bbbbbb;letter-spacing:-0.053px;">Debug</span>
<svg style="left:196px;top:976px" width="13" height="12"><g fill="#afb1b3"><rect x="0" y="0.5" width="2" height="2"/><rect x="3.5" y="0.5" width="9" height="2"/><rect x="0" y="4.8" width="2" height="2"/><rect x="3.5" y="4.8" width="9" height="2"/><rect x="0" y="9" width="2" height="2"/><rect x="3.5" y="9" width="9" height="2"/></g></svg>
<span class="t" id="f31" style="left:215px;top:972.5px;font-size:14px;line-height:20px;color:#bbbbbb;letter-spacing:-0.301px;">TODO</span>
<svg style="left:280px;top:974px" width="14" height="14" viewBox="0 0 14 14"><circle cx="7" cy="7" r="6.8" fill="#afb1b3"/><rect x="6" y="2.8" width="2" height="5.4" fill="#3c3f41"/><rect x="6" y="9.4" width="2" height="2" fill="#3c3f41"/></svg>
<span class="t" id="f32" style="left:300px;top:972.5px;font-size:14px;line-height:20px;color:#bbbbbb;letter-spacing:-0.268px;">Problems</span>
<svg style="left:384px;top:975px" width="15" height="13" viewBox="0 0 15 13"><rect x="0" y="0" width="15" height="13" fill="#afb1b3"/><path d="M2.5 3L6 6.2L2.5 9.4" stroke="#3c3f41" stroke-width="1.5" fill="none"/><rect x="7" y="9" width="5" height="1.4" fill="#3c3f41"/></svg>
<span class="t" id="f33" style="left:405px;top:972.5px;font-size:14px;line-height:20px;color:#bbbbbb;letter-spacing:-0.113px;">Terminal</span>
<svg style="left:485px;top:974px" width="16" height="16" viewBox="0 0 16 16"><g fill="#afb1b3"><path d="M8 0.5L15.5 4.2L8 8L0.5 4.2Z"/><path d="M2.2 7L8 9.9L13.8 7L15.5 7.9L8 11.6L0.5 7.9Z"/><path d="M2.2 10.6L8 13.5L13.8 10.6L15.5 11.5L8 15.2L0.5 11.5Z"/></g></svg>
<span class="t" id="f34" style="left:506px;top:972.5px;font-size:14px;line-height:20px;color:#bbbbbb;letter-spacing:-0.265px;">Python Packages</span>
<svg style="left:643px;top:975px;opacity:1" width="15" height="15" viewBox="0 0 12 12"><path fill="#afb1b3" d="M5 0H7C8.4 0 9.2 .9 9.2 2.2V4.2C9.2 5.3 8.4 6 7.4 6H4.6C3.6 6 3 6.7 3 7.6V8.8H1.9C.7 8.8 0 7.8 0 6.4V5.6C0 4.3 .8 3.5 2 3.5H6.1V3H3V2.2C3 .9 3.7 0 5 0ZM4.3 .9A.65.65 0 1 0 4.3 2.2A.65.65 0 1 0 4.3 .9Z"/><path fill="#afb1b3" transform="rotate(180 6 6)" d="M5 0H7C8.4 0 9.2 .9 9.2 2.2V4.2C9.2 5.3 8.4 6 7.4 6H4.6C3.6 6 3 6.7 3 7.6V8.8H1.9C.7 8.8 0 7.8 0 6.4V5.6C0 4.3 .8 3.5 2 3.5H6.1V3H3V2.2C3 .9 3.7 0 5 0ZM4.3 .9A.65.65 0 1 0 4.3 2.2A.65.65 0 1 0 4.3 .9Z"/></svg>
<span class="t" id="f35" style="left:664px;top:972.5px;font-size:14px;line-height:20px;color:#bbbbbb;letter-spacing:-0.132px;">Python Console</span>
<div class="a" style="left:1798.5px;top:974.5px;width:15.5px;height:15.5px;border-radius:8px 8px 1px 8px;background:#cf5848"></div>
<span class="t" id="f36" style="left:1803px;top:973.0px;font-size:12px;line-height:17px;color:#ffffff;font-weight:bold;">2</span>
<span class="t" id="f37" style="left:1820px;top:972.5px;font-size:14px;line-height:20px;color:#bbbbbb;letter-spacing:-0.229px;">Event Log</span>
<div class="a" style="left:0px;top:995px;width:1920px;height:25px;background:#3c3f41;"></div>
<svg style="left:7px;top:999.5px" width="17" height="17"><rect x="2.9" y="1.2" width="12" height="10.6" stroke="#a4a6a8" stroke-width="1.8" fill="none"/><path d="M0.8 5V15H11.5" stroke="#a4a6a8" stroke-width="1.5" fill="none"/></svg>
<span class="t" id="f38" style="left:34px;top:997.0px;font-size:16px;line-height:22px;color:#bbbbbb;letter-spacing:0.243px;">Connection to Python debugger failed: Interrupted function call: accept failed (yesterday 22:21)</span>
<span class="t" id="f39" style="left:1558px;top:997.0px;font-size:16px;line-height:22px;color:#bbbbbb;letter-spacing:-0.285px;">14:1</span>
<span class="t" id="f40" style="left:1604px;top:997.0px;font-size:16px;line-height:22px;color:#bbbbbb;letter-spacing:-1.320px;">CRLF</span>
<span class="t" id="f41" style="left:1655px;top:997.0px;font-size:16px;line-height:22px;color:#787b7d;letter-spacing:-0.466px;">UTF-8</span>
<span class="t" id="f42" style="left:1713px;top:997.0px;font-size:16px;line-height:22px;color:#bbbbbb;letter-spacing:-0.256px;">4 spaces</span>
<span class="t" id="f43" style="left:1790px;top:997.0px;font-size:16px;line-height:22px;color:#bbbbbb;letter-spacing:0.054px;">Python 3.10</span>
<svg style="left:1888px;top:1000px" width="18" height="16" viewBox="0 0 18 16"><path d="M2.2 8V5.2A2.9 2.9 0 0 1 8 5.2V6.6" stroke="#afb1b3" stroke-width="1.5" fill="none"/><rect x="6" y="7" width="10.2" height="7" fill="#afb1b3"/></svg>
</div>
<div class="a" id="np" style="left:963px;top:65px;width:957px;height:853.5px;background:#fff;border-radius:8px;box-shadow:0 0 0 1px rgba(0,0,0,.22),0 16px 56px 10px rgba(0,0,0,.40),0 2px 10px rgba(0,0,0,.22);overflow:hidden">
</div>
<svg style="left:975px;top:73px" width="15" height="20" viewBox="0 0 15 20"><path fill="#7f9aa8" d="M1 2H14V19.5H1Z"/><path fill="#39b2e3" d="M0.5 1.5H13.5V18H0.5Z"/><g fill="#1c8fc4"><rect x="2.3" y="5" width="9.4" height="1.6"/><rect x="2.3" y="8" width="9.4" height="1.6"/><rect x="2.3" y="11" width="9.4" height="1.6"/><rect x="2.3" y="14" width="9.4" height="1.6"/></g><g fill="#8aa4b1"><rect x="2" y="0" width="1.5" height="3"/><rect x="4.8" y="0" width="1.5" height="3"/><rect x="7.6" y="0" width="1.5" height="3"/><rect x="10.4" y="0" width="1.5" height="3"/></g></svg>
<span class="t" id="f44" style="left:997px;top:72.5px;font-size:15px;line-height:21px;color:#000;letter-spacing:0.333px;">爬取文件.txt - 记事本</span>
<svg style="left:1766px;top:76px" width="14" height="14"><path d="M0 6.5H13" stroke="#000" stroke-width="1.1"/></svg>
<svg style="left:1824px;top:76px" width="14" height="14"><rect x="1" y="1" width="11" height="11" rx="1.2" stroke="#000" stroke-width="1.1" fill="none"/></svg>
<svg style="left:1883px;top:76px" width="14" height="14"><path d="M1 1L13 13M13 1L1 13" stroke="#000" stroke-width="1.1" fill="none"/></svg>
<span class="t" id="f45" style="left:974px;top:103.5px;font-size:15px;line-height:21px;color:#000;letter-spacing:-0.631px;">文件(F)</span>
<span class="t" id="f46" style="left:1039px;top:103.5px;font-size:15px;line-height:21px;color:#000;letter-spacing:-0.600px;">编辑(E)</span>
<span class="t" id="f47" style="left:1104px;top:103.5px;font-size:15px;line-height:21px;color:#000;letter-spacing:0.066px;">格式(O)</span>
<span class="t" id="f48" style="left:1174px;top:103.5px;font-size:15px;line-height:21px;color:#000;letter-spacing:0.000px;">视图(V)</span>
<span class="t" id="f49" style="left:1242px;top:103.5px;font-size:15px;line-height:21px;color:#000;letter-spacing:0.234px;">帮助(H)</span>
<div class="a" style="left:964px;top:126px;width:956px;height:1px;background:#f0f0f0;"></div>
<div class="a" style="left:1900px;top:127px;width:20px;height:763px;background:#f0f0f0;"></div>
<div class="a" style="left:1907px;top:184px;width:6px;height:67px;background:#8b8b8b;"></div>
<span class="t" id="f50" style="left:968.5px;top:126.8px;font-size:21px;line-height:27px;color:#000;letter-spacing:-0.232px;">michael</span>
<span class="t" id="f51" style="left:968.5px;top:153.8px;font-size:21px;line-height:27px;color:#000;letter-spacing:-0.107px;">shadow</span>
<span class="t" id="f52" style="left:968.5px;top:180.8px;font-size:21px;line-height:27px;color:#000;letter-spacing:-0.156px;">master</span>
<span class="t" id="f53" style="left:968.5px;top:207.8px;font-size:21px;line-height:27px;color:#000;letter-spacing:-0.018px;">jennifer</span>
<span class="t" id="f54" style="left:968.5px;top:234.8px;font-size:21px;line-height:27px;color:#000;letter-spacing:0.867px;">111111</span>
<span class="t" id="f55" style="left:968.5px;top:261.8px;font-size:21px;line-height:27px;color:#000;letter-spacing:-0.305px;">2000</span>
<span class="t" id="f56" style="left:968.5px;top:288.8px;font-size:21px;line-height:27px;color:#000;letter-spacing:0.185px;">jordan</span>
<span class="t" id="f57" style="left:968.5px;top:315.8px;font-size:21px;line-height:27px;color:#000;letter-spacing:-0.111px;">superman</span>
<span class="t" id="f58" style="left:968.5px;top:342.8px;font-size:21px;line-height:27px;color:#000;letter-spacing:-0.367px;">harley</span>
<span class="t" id="f59" style="left:968.5px;top:369.8px;font-size:21px;line-height:27px;color:#000;letter-spacing:-0.074px;">1234567</span>
<span class="t" id="f60" style="left:968.5px;top:396.8px;font-size:21px;line-height:27px;color:#000;letter-spacing:-0.031px;">fuckme</span>
<span class="t" id="f61" style="left:968.5px;top:423.8px;font-size:21px;line-height:27px;color:#000;letter-spacing:0.076px;">hunter</span>
<span class="t" id="f62" style="left:968.5px;top:450.8px;font-size:21px;line-height:27px;color:#000;letter-spacing:0.125px;">fuckyou</span>
<span class="t" id="f63" style="left:968.5px;top:477.8px;font-size:21px;line-height:27px;color:#000;letter-spacing:-0.111px;">trustno1</span>
<span class="t" id="f64" style="left:968.5px;top:504.8px;font-size:21px;line-height:27px;color:#000;letter-spacing:-0.034px;">ranger</span>
<span class="t" id="f65" style="left:968.5px;top:531.8px;font-size:21px;line-height:27px;color:#000;letter-spacing:-0.062px;">buster</span>
<span class="t" id="f66" style="left:968.5px;top:558.8px;font-size:21px;line-height:27px;color:#000;letter-spacing:-0.104px;">thomas</span>
<span class="t" id="f67" style="left:968.5px;top:585.8px;font-size:21px;line-height:27px;color:#000;letter-spacing:0.286px;">tigger</span>
<span class="t" id="f68" style="left:968.5px;top:612.8px;font-size:21px;line-height:27px;color:#000;letter-spacing:0.523px;">robert</span>
<span class="t" id="f69" style="left:968.5px;top:639.8px;font-size:21px;line-height:27px;color:#000;letter-spacing:-0.518px;">soccer</span>
<span class="t" id="f70" style="left:968.5px;top:666.8px;font-size:21px;line-height:27px;color:#000;letter-spacing:-0.066px;">fuck</span>
<span class="t" id="f71" style="left:968.5px;top:693.8px;font-size:21px;line-height:27px;color:#000;letter-spacing:0.117px;">batman</span>
<span class="t" id="f72" style="left:968.5px;top:720.8px;font-size:21px;line-height:27px;color:#000;letter-spacing:-0.465px;">test</span>
<span class="t" id="f73" style="left:968.5px;top:747.8px;font-size:21px;line-height:27px;color:#000;letter-spacing:-1.215px;">pass</span>
<span class="t" id="f74" style="left:968.5px;top:774.8px;font-size:21px;line-height:27px;color:#000;letter-spacing:0.013px;">killer</span>
<span class="t" id="f75" style="left:968.5px;top:801.8px;font-size:21px;line-height:27px;color:#000;letter-spacing:-0.133px;">hockey</span>
<span class="t" id="f76" style="left:968.5px;top:828.8px;font-size:21px;line-height:27px;color:#000;letter-spacing:0.227px;">george</span>
<span class="t" id="f77" style="left:968.5px;top:855.8px;font-size:21px;line-height:27px;color:#000;letter-spacing:-0.239px;">charlie</span>
<span class="t" id="f78" style="left:968.5px;top:882.8px;font-size:21px;line-height:27px;color:#000;letter-spacing:-0.398px;">andrew</span>
<div class="a" style="left:963px;top:890px;width:957px;height:28.5px;background:#f0f0f0;border-top:1px solid #d9d9d9;border-radius:0 0 8px 8px"></div>
<div class="a" style="left:1381px;top:891px;width:1px;height:27px;background:#d7d7d7;"></div>
<div class="a" style="left:1556px;top:891px;width:1px;height:27px;background:#d7d7d7;"></div>
<div class="a" style="left:1619px;top:891px;width:1px;height:27px;background:#d7d7d7;"></div>
<div class="a" style="left:1769px;top:891px;width:1px;height:27px;background:#d7d7d7;"></div>
<span class="t" id="f79" style="left:1394px;top:894.5px;font-size:15px;line-height:21px;color:#000;letter-spacing:-0.004px;">行 1，列 1</span>
<span class="t" id="f80" style="left:1565px;top:894.5px;font-size:15px;line-height:21px;color:#000;letter-spacing:0.406px;">100%</span>
<span class="t" id="f81" style="left:1628px;top:894.5px;font-size:15px;line-height:21px;color:#000;letter-spacing:0.201px;">Windows (CRLF)</span>
<span class="t" id="f82" style="left:1778px;top:894.5px;font-size:15px;line-height:21px;color:#000;letter-spacing:0.300px;">UTF-8</span>
<svg style="left:1907px;top:906px" width="12" height="12"><g fill="#c2c2c2"><rect x="8" y="0" width="3" height="3"/><rect x="4" y="4" width="3" height="3"/><rect x="8" y="4" width="3" height="3"/><rect x="0" y="8" width="3" height="3"/><rect x="4" y="8" width="3" height="3"/><rect x="8" y="8" width="3" height="3"/></g></svg>
<div class="a" style="left:95px;top:500px;width:666.5px;height:193.5px;border:8.5px solid #ed1c24;border-radius:3px"></div>
<svg style="left:0;top:0" width="1920" height="1020"><path fill="#ed1c24" stroke="#ed1c24" stroke-width="1" stroke-linejoin="round" d="M792.4 712.6L895.6 586.2L886 581.4L925.2 565L913.6 605.6L908.3 596.2L795.6 715.8A2.2 2.2 0 0 1 792.4 712.6Z"/></svg>
<div class="a" style="left:965.7px;top:110.6px;width:116.3px;height:776.3px;border:7.6px solid #ed1c24;border-radius:4px"></div>
<span class="t" id="f83" style="left:1777px;top:988.0px;font-size:17.5px;line-height:24px;color:rgba(255,255,255,.82);text-shadow:0 0 1px rgba(0,0,0,.6);letter-spacing:0.348px;">CSDN @小木</span>
</body></html>
